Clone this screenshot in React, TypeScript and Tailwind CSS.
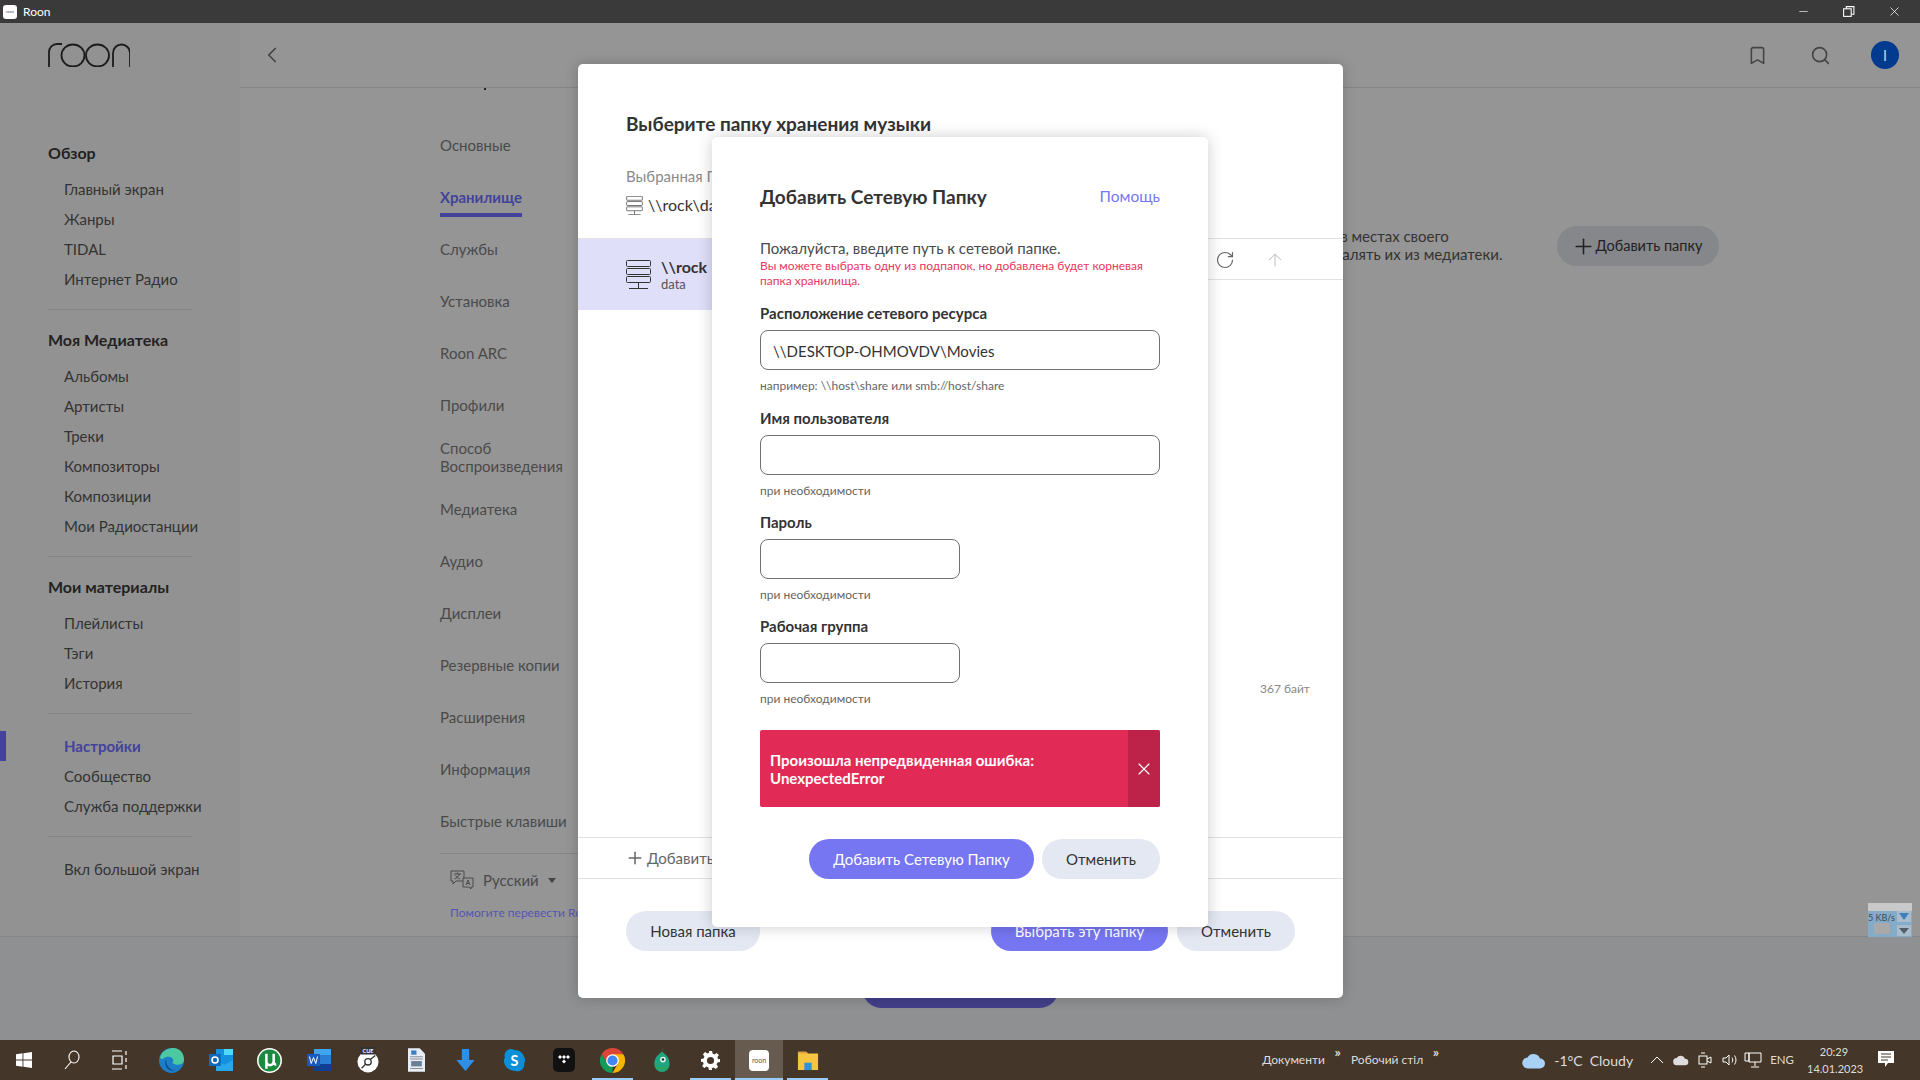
import React from "react";
import { Bookmark, ChevronLeft, Plus, RotateCw, Search, ArrowUp, X, Minus } from "lucide-react";

const overview = ["Главный экран", "Жанры", "TIDAL", "Интернет Радио"];
const library = ["Альбомы", "Артисты", "Треки", "Композиторы", "Композиции", "Мои Радиостанции"];
const mine = ["Плейлисты", "Тэги", "История"];
const settingsTabs = ["Службы", "Установка", "Roon ARC", "Профили"];
const settingsTabs2 = ["Медиатека", "Аудио", "Дисплеи", "Резервные копии", "Расширения", "Информация", "Быстрые клавиши"];

const SideLink = ({ label, active }: { label: string; active?: boolean }) => (
  <div className={active ? "h-[30px] pl-4 leading-[30px] text-[15px] font-bold text-[#43439a]" : "h-[30px] pl-4 leading-[30px] text-[15px] text-[#333]"}>
    {label}
  </div>
);

const Section = ({ title, items }: { title: string; items: string[] }) => (
  <div>
    <div className="h-[30px] text-[16px] font-bold leading-[30px] text-[#222]">{title}</div>
    <div className="mt-[6px]">
      {items.map((i) => (
        <SideLink key={i} label={i} />
      ))}
    </div>
  </div>
);

const Divider = () => <div className="my-[15px] h-px w-[144px] bg-[#858585]" />;

const ServerIcon = ({ className }: { className: string }) => (
  <svg viewBox="0 0 25 29" fill="none" stroke="#333" strokeWidth="1" className={className}>
    <rect x="0.5" y="0.5" width="24" height="6" rx="1" />
    <rect x="0.5" y="8.5" width="24" height="6" rx="1" />
    <rect x="0.5" y="16.5" width="24" height="6" rx="1" />
    <path d="M12.5 23v5M3 28.5h19" />
  </svg>
);

const Field = ({ label, hint, value, short, className }: { label: string; hint: string; value?: string; short?: boolean; className?: string }) => (
  <div className={className}>
    <div className="text-[15px] font-bold leading-[20px] text-[#333]">{label}</div>
    <div className={short ? "mt-[7px] h-[40px] w-[200px] rounded-lg border border-[#707070] px-3 text-[15px] leading-[40px] text-[#333]" : "mt-[7px] h-[40px] rounded-lg border border-[#707070] px-3 text-[15px] leading-[40px] text-[#333]"}>
      {value}
    </div>
    <div className="mt-[8px] text-[12px] leading-[15px] text-[#666]">{hint}</div>
  </div>
);

const Pill = ({ label, primary, className }: { label: string; primary?: boolean; className: string }) => (
  <div className={`${primary ? "bg-[#7676f2] text-white" : "bg-[#e4e8f2] text-[#333]"} flex h-10 items-center justify-center rounded-full text-[15px] ${className}`}>
    {label}
  </div>
);

const TaskIcon = ({ children, wide, active, line }: { children: React.ReactNode; wide?: boolean; active?: boolean; line?: boolean }) => (
  <div className={`relative flex h-10 shrink-0 items-center justify-center ${wide ? "w-[49px]" : "w-[48px]"} ${active ? "bg-[#675b50]" : ""}`}>
    {children}
    {line && <div className={`absolute bottom-0 h-[2px] bg-[#99ccf8] ${active ? "left-0 right-0" : "left-1 right-1"}`} />}
  </div>
);

const Cloud = ({ className, fill }: { className: string; fill: string }) => (
  <svg viewBox="0 0 24 16" className={className}>
    <path d="M6 16a5.500 5.500 0 0 1-.5-11A7 7 0 0 1 18 6a5 5 0 0 1 0 10z" fill={fill} />
  </svg>
);

export default function App() {
  return (
    <div className="relative flex h-[1080px] w-[1920px] flex-col overflow-hidden font-['Lato','Noto_Sans',sans-serif]">
      {/* title bar */}
      <div className="flex h-[23px] shrink-0 items-center bg-[#3a3a3a] text-white">
        <div className="ml-[3px] flex h-[14px] w-[14px] items-center justify-center rounded-[3px] bg-white text-[4px] text-[#555]">roon</div>
        <span className="ml-[6px] text-[12px]">Roon</span>
        <div className="ml-auto flex items-center">
          <Minus size={13} strokeWidth={1.2} className="mr-[32px]" />
          <svg viewBox="0 0 12 12" fill="none" stroke="white" strokeWidth="1" className="mr-[32px] h-[13px] w-[13px]">
            <rect x="1.5" y="3.5" width="7" height="7" />
            <path d="M4 3.5V1.5h7v7H8.5" />
          </svg>
          <X size={15} strokeWidth={1.2} className="mr-[18px]" />
        </div>
      </div>

      {/* app */}
      <div className="flex min-h-0 flex-1 flex-col bg-[#959595]">
        <div className="flex h-[913px] shrink-0">
          <aside className="relative w-[240px] shrink-0 bg-[#929292] pl-[48px]">
            <svg viewBox="0 0 82 24" fill="none" stroke="#1c1c1c" strokeWidth="1.8" className="mt-[20px] h-[24px] w-[82px]">
              <path d="M1 24V9a8 8 0 0 1 8-8h5" />
              <ellipse cx="25" cy="12.5" rx="11.5" ry="11" />
              <ellipse cx="49.5" cy="12.5" rx="11.5" ry="11" />
              <path d="M65 24V10a8.5 8.5 0 0 1 17 0v14" />
            </svg>
            <div className="mt-[71px]">
              <Section title="Обзор" items={overview} />
              <Divider />
              <Section title="Моя Медиатека" items={library} />
              <Divider />
              <Section title="Мои материалы" items={mine} />
              <Divider />
              <div className="pt-[2px]">
                <SideLink label="Настройки" active />
                <SideLink label="Сообщество" />
                <SideLink label="Служба поддержки" />
              </div>
              <Divider />
              <div className="pt-[2px]">
                <SideLink label="Вкл большой экран" />
              </div>
            </div>
            <div className="absolute left-0 top-[708px] h-[30px] w-[6px] bg-[#43439a]" />
          </aside>

          <div className="flex min-w-0 flex-1 flex-col">
            <header className="relative flex h-[65px] shrink-0 items-center border-b border-[#858585] pl-[19px] pr-[21px] text-[#444]">
              <ChevronLeft size={26} strokeWidth={1.6} />
              <Bookmark size={21} strokeWidth={1.8} className="ml-auto mr-[42px]" />
              <Search size={21} strokeWidth={1.8} className="mr-[40px]" />
              <div className="flex h-[28px] w-[28px] items-center justify-center rounded-full bg-[#013a8e] text-[16px] text-[#b9c6dc]">I</div>
              <div className="absolute bottom-[-3px] left-[244px] h-[2px] w-[2px] bg-[#222]" />
            </header>

            <div className="flex min-h-0 flex-1">
              <nav className="ml-[200px] w-[200px] shrink-0 pt-[41px] text-[15px] text-[#4a4a4a]">
                <div className="h-[52px] leading-[32px]">Основные</div>
                <div className="h-[52px] leading-[32px]">
                  <span className="inline-block h-[36px] border-b-4 border-[#43439a] font-bold text-[#43439a]">Хранилище</span>
                </div>
                {settingsTabs.map((t) => (
                  <div key={t} className="h-[52px] leading-[32px]">{t}</div>
                ))}
                <div className="mb-[2px] mt-[-2px] h-[52px] leading-[18px]">Способ<br />Воспроизведения</div>
                {settingsTabs2.map((t) => (
                  <div key={t} className="h-[52px] leading-[32px]">{t}</div>
                ))}
                <div className="mt-[-4px] border-t border-[#858585] pl-[10px] pt-[15px]">
                  <div className="flex items-center">
                    <svg viewBox="0 0 24 20" fill="none" stroke="#444" strokeWidth="0.9" className="h-[20px] w-[24px]">
                      <path d="M1 1h13v10H6l-3 3v-3H1z" />
                      <path d="M13 8h10v9h-2v2l-2-2h-6z" fill="#959595" />
                      <path d="M4 4h7M7.500 2.500V4M9.500 4c-1 2.500-3 4-5 5M5.500 5.500c1 1.500 3 3 4.500 3.500" />
                      <path d="M16 15l2-5 2 5M17 13.500h2" />
                    </svg>
                    <span className="ml-[9px]">Русский</span>
                    <span className="ml-[9px] h-0 w-0 border-x-[4px] border-t-[5px] border-x-transparent border-t-[#444]" />
                  </div>
                  <div className="mt-[12px] whitespace-nowrap text-[12px] text-[#5555b0]">Помогите перевести Roon</div>
                </div>
              </nav>
              <div className="relative min-w-0 flex-1">
                <div className="absolute left-[680px] top-[139px] whitespace-nowrap text-[15px] leading-[18px] text-[#333]">
                  ки в местах своего
                  <br />
                  <span className="ml-[6px]">удалять их из медиатеки.</span>
                </div>
                <div className="absolute left-[917px] top-[138px] flex h-10 w-[162px] items-center justify-center rounded-full bg-[#85878b] text-[14.500px] text-[#222]">
                  <Plus size={25} strokeWidth={1.5} className="-ml-[3px]" />
                  Добавить папку
                </div>
              </div>
            </div>
          </div>
        </div>

        {/* player bar */}
        <div className="flex flex-1 justify-center border-t border-[#858585] bg-[#8f9092] pt-[31px]">
          <div className="h-[40px] w-[197px] rounded-[20px] bg-[#433f8a]" />
        </div>
      </div>

      {/* tray widget */}
      <div className="absolute left-[1868px] top-[903px] h-[34px] w-[44px] bg-[#84abc8]">
        <div className="h-[8px] bg-[#c9c9c9]" />
        <div className="relative h-[26px]">
          <div className="text-[9px] leading-[14px] text-[#3d4a55]">5 KB/s</div>
          <div className="absolute right-[1px] top-0 flex h-[11px] w-[14px] items-center justify-center bg-[#a9bccb]">
            <span className="h-0 w-0 border-x-[5px] border-t-[7px] border-x-transparent border-t-[#3a7fc0]" />
          </div>
          <div className="absolute right-[1px] top-[14px] flex h-[11px] w-[14px] items-center justify-center bg-[#a9bccb]">
            <span className="h-0 w-0 border-x-[5px] border-t-[6px] border-x-transparent border-t-[#53606b]" />
          </div>
          <div className="absolute left-[6px] top-[12px] h-[11px] w-[16px] rounded-[2px] bg-[#a9a9a9]" />
        </div>
      </div>

      {/* taskbar */}
      <div className="flex h-10 shrink-0 items-center bg-[#443628] text-[#ddd]">
        <div className="flex items-center">
          <TaskIcon>
            <svg viewBox="0 0 16 16" className="h-[16px] w-[16px]" fill="white">
              <path d="M0 2.3l6.5-1v6.3H0zM7.4 1.2L16 0v7.6H7.4zM0 8.4h6.5v6.3L0 13.7zM7.4 8.4H16V16l-8.6-1.2z" />
            </svg>
          </TaskIcon>
          <TaskIcon>
            <svg viewBox="0 0 16 20" fill="none" stroke="white" strokeWidth="1.1" className="h-[20px] w-[16px]">
              <ellipse cx="10" cy="7" rx="5" ry="6" />
              <path d="M7 12l-6 7" />
            </svg>
          </TaskIcon>
          <TaskIcon>
            <svg viewBox="0 0 16 20" fill="none" stroke="white" strokeWidth="1.2" className="h-[20px] w-[16px]">
              <path d="M0 1h10M0 19h10M1 6h9v8H1zM14 1v4M14 8v4M14 15v4" />
            </svg>
          </TaskIcon>
        </div>
        <div className="ml-[3px] flex items-center">
          <TaskIcon wide>
            <svg viewBox="0 0 24 24" className="h-[25px] w-[25px]">
              <circle cx="12" cy="12" r="12" fill="#1c7ec7" />
              <path d="M1 9C3 2 10 0 14 0c6 0 10 5 10 11 0 3-2 5-6 5-3 0-5-1-5-2 1-1 1-3 0-4-2-2-6-2-9 0-1 1-2 1-3-1z" fill="#4cc9a0" />
              <path d="M16 22C10 23 6 19 6 14c0-1 0-2 1-3-1 5 3 10 9 11z" fill="#114a8b" />
            </svg>
          </TaskIcon>
          <TaskIcon wide>
            <svg viewBox="0 0 24 24" className="h-[24px] w-[24px]">
              <path d="M7 1h17v22H7z" fill="#1490df" />
              <path d="M7 12l8.500 5L24 12v11H7z" fill="#28a8ea" />
              <path d="M15 1h9v6h-9z" fill="#50d9ff" />
              <rect x="0" y="6" width="12" height="12" rx="1" fill="#0f6cbd" />
              <circle cx="6" cy="12" r="3" fill="none" stroke="white" strokeWidth="1.6" />
            </svg>
          </TaskIcon>
          <TaskIcon wide>
            <svg viewBox="0 0 24 24" className="h-[25px] w-[25px]">
              <circle cx="12" cy="12" r="12" fill="white" />
              <circle cx="12" cy="12" r="10.500" fill="#1a8a3e" />
              <path d="M9 5.500V20M9 13a3.500 3.500 0 0 0 7 0V5.500M16 13c0 2 1 3 2.500 3" fill="none" stroke="white" strokeWidth="2.400" />
            </svg>
          </TaskIcon>
          <TaskIcon wide>
            <svg viewBox="0 0 24 24" className="h-[24px] w-[24px]">
              <path d="M7 1h17v22H7z" fill="#2b7cd3" />
              <path d="M7 1h17v6H7z" fill="#41a5ee" />
              <path d="M7 16h17v7H7z" fill="#103f91" />
              <rect x="0" y="6" width="13" height="12" rx="1" fill="#185abd" />
              <path d="M2.500 8.500l1.700 7 2.300-6 2.300 6 1.700-7" fill="none" stroke="white" strokeWidth="1" />
            </svg>
          </TaskIcon>
          <TaskIcon wide>
            <svg viewBox="0 0 24 28" className="h-[26px] w-[22px]">
              <circle cx="12" cy="16" r="11.500" fill="white" />
              <rect x="4" y="0" width="16" height="8" fill="#333" />
              <text x="12" y="6.500" textAnchor="middle" fontSize="6" fontWeight="700" fill="white">CUE</text>
              <circle cx="12" cy="16" r="3.500" fill="none" stroke="#333" strokeWidth="1.500" />
              <path d="M5 23l4.500-4.500M14.500 13.500L20 9" stroke="#333" strokeWidth="1.500" />
            </svg>
          </TaskIcon>
          <TaskIcon wide>
            <svg viewBox="0 0 16 22" className="h-[24px] w-[17px]">
              <path d="M0 0h11l5 5v17H0z" fill="#e8edf3" />
              <path d="M2 8h12M2 10h12M2 19h12" stroke="#8a9099" strokeWidth="1" />
              <rect x="3" y="2" width="5" height="4" fill="#3d7fc4" />
              <rect x="3" y="12" width="10" height="5" fill="#6b7f94" />
            </svg>
          </TaskIcon>
          <TaskIcon wide>
            <svg viewBox="0 0 20 24" className="h-[22px] w-[19px]" fill="#2f8fe6">
              <path d="M6 0h8v12h6L10 24 0 12h6z" />
            </svg>
          </TaskIcon>
          <TaskIcon wide>
            <svg viewBox="0 0 24 24" className="h-[25px] w-[23px]">
              <path d="M7 0a7 7 0 0 1 5 1c6 0 11 5 11 11 0 1 0 2-1 3a7 7 0 0 1-9 8C6 23 1 18 1 12c0-1 0-2 1-3A7 7 0 0 1 7 0z" fill="#0a8fd8" />
              <text x="12" y="17.500" textAnchor="middle" fontSize="15" fontWeight="700" fill="white">S</text>
            </svg>
          </TaskIcon>
          <TaskIcon wide>
            <svg viewBox="0 0 22 24" className="h-[24px] w-[22px]">
              <rect width="22" height="24" rx="5" fill="#111" />
              <path d="M7 7l2 2-2 2-2-2zM11 7l2 2-2 2-2-2zM15 7l2 2-2 2-2-2zM11 11.500l2 2-2 2-2-2z" fill="white" />
            </svg>
          </TaskIcon>
          <TaskIcon wide line>
            <svg viewBox="0 0 24 24" className="h-[25px] w-[25px]">
              <path d="M12 12L22.400 6A12 12 0 0 0 1.600 6L7 15z" fill="#db4437" />
              <path d="M12 24A12 12 0 0 1 1.600 6L7 15l5 3z" fill="#0f9d58" />
              <path d="M12 24a12 12 0 0 0 10.400-18H12l5 9z" fill="#f4b400" />
              <circle cx="12" cy="12" r="5.500" fill="#4285f4" stroke="white" strokeWidth="1.200" />
            </svg>
          </TaskIcon>
          <TaskIcon wide>
            <svg viewBox="0 0 16 26" className="h-[25px] w-[16px]">
              <path d="M9 0c0 2 0 3-1 4 4 3 8 6 8 13a8 8 0 0 1-16 0C0 10 4 7 8 4z" fill="#1fa67f" />
              <path d="M1 19a8 7 0 0 0 14 0c-3 2-10 2-14 0z" fill="#2ea84a" />
              <circle cx="9" cy="12" r="3" fill="#d7f2e4" />
              <circle cx="9" cy="12" r="1.300" fill="#133" />
            </svg>
          </TaskIcon>
          <TaskIcon wide line>
            <svg viewBox="0 0 24 24" className="h-[19px] w-[19px]" fill="white">
              <path fillRule="evenodd" d="M10 0h4l.6 3.300 2.400 1 2.800-1.900 2.800 2.800-1.900 2.800 1 2.400L24 10v4l-3.300.6-1 2.400 1.900 2.800-2.800 2.800-2.800-1.900-2.400 1L14 24h-4l-.6-3.300-2.400-1-2.800 1.900-2.800-2.800 1.900-2.800-1-2.400L0 14v-4l3.300-.6 1-2.400L2.400 4.200l2.800-2.800L8 3.300l2.400-1zM12 7.500a4.500 4.500 0 1 0 0 9 4.500 4.500 0 0 0 0-9z" />
            </svg>
          </TaskIcon>
          <TaskIcon active line>
            <div className="flex h-[21px] w-[20px] items-center justify-center rounded-[4px] bg-white text-[7px] text-[#555]">roon</div>
          </TaskIcon>
          <TaskIcon wide line>
            <svg viewBox="0 0 24 24" className="h-[22px] w-[22px]">
              <path d="M1 3h9l2 2h11v18H1z" fill="#f5c542" />
              <path d="M1 3h9l2 2H1z" fill="#e8a33d" />
              <path d="M8 15h8v8H8z" fill="#2f8fd8" />
            </svg>
            <div className="absolute bottom-0 right-[4px] h-[2px] w-[9px] bg-[#7fa6c6]" />
          </TaskIcon>
        </div>

        <div className="ml-auto flex items-center text-[12px]">
          <span className="relative mr-[26px]">
            Документи
            <span className="absolute -right-[16px] -top-[10px] text-[14px] font-bold">»</span>
          </span>
          <span className="relative mr-[99px]">
            Робочий стіл
            <span className="absolute -right-[16px] -top-[10px] text-[14px] font-bold">»</span>
          </span>
          <Cloud className="mr-[8px] h-[17px] w-[24px]" fill="#a9d0f5" />
          <span className="mr-[7px] text-[14px]">-1°C</span>
          <span className="mr-[17px] text-[14px]">Cloudy</span>
          <svg viewBox="0 0 14 8" fill="none" stroke="white" className="mr-[9px] h-[8px] w-[14px]">
            <path d="M1 7l6-6 6 6" />
          </svg>
          <Cloud className="mr-[9px] h-[12px] w-[16px]" fill="#ddd" />
          <svg viewBox="0 0 14 16" fill="none" stroke="white" className="mr-[10px] h-[16px] w-[14px]">
            <rect x="1" y="4" width="8" height="8" />
            <path d="M9 7l4-2v6l-4-2M3 1h4M3 15h4" />
          </svg>
          <svg viewBox="0 0 16 14" fill="none" stroke="white" className="mr-[6px] h-[14px] w-[16px]">
            <path d="M1 5h3l3-3v10L4 9H1zM10 4.500c1 1.500 1 3.500 0 5M12.500 2.500c2 2.500 2 6.500 0 9" />
          </svg>
          <svg viewBox="0 0 18 16" fill="none" stroke="white" className="mr-[8px] h-[16px] w-[18px]">
            <path d="M5 1h12v9H5zM1 1h4v8H1zM11 10v4M7 15h8" />
          </svg>
          <span className="mr-[13px] text-[11.500px]">ENG</span>
          <div className="mr-[17px] w-[54px] text-center text-[11px] leading-[17px]">
            <div>20:29</div>
            <div>14.01.2023</div>
          </div>
          <svg viewBox="0 0 16 18" className="mr-[26px] h-[18px] w-[16px]">
            <path d="M0 0h16v12h-6l-3 4v-4H0z" fill="white" />
            <path d="M3 3h10M3 6h10M3 9h7" stroke="#443628" />
          </svg>
        </div>
      </div>

      {/* storage folder dialog */}
      <div className="absolute left-[578px] top-[64px] flex h-[934px] w-[765px] flex-col rounded-[5px] bg-white shadow-[0_0_14px_rgba(0,0,0,0.2)]">
        <div className="pl-[48px] pt-[48px] text-[19px] font-bold leading-[24px] text-[#333]">Выберите папку хранения музыки</div>
        <div className="pl-[48px] pt-[30px] text-[15px] leading-[20px] text-[#8a8a8a]">Выбранная Папка</div>
        <div className="flex items-center pl-[48px] pt-[7px] text-[16px] text-[#333]">
          <ServerIcon className="mr-[5px] h-[19px] w-[17px]" />
          \\rock\data
        </div>
        <div className="mt-[21px] flex h-[70px] items-center border-t border-[#e2e2e2] pl-[48px]">
          <div className="absolute left-0 top-[175px] flex h-[71px] w-[134px] items-center bg-[#dfdff9] pl-[48px]">
            <ServerIcon className="h-[29px] w-[25px]" />
            <div className="ml-[10px]">
              <div className="text-[16px] font-bold leading-[18px] text-[#333]">\\rock</div>
              <div className="text-[13px] leading-[16px] text-[#555]">data</div>
            </div>
          </div>
        </div>
        <div className="absolute right-[60px] top-[186px] flex items-center text-[#666]">
          <RotateCw size={20} strokeWidth={1.4} />
          <ArrowUp size={20} strokeWidth={1.2} className="ml-[30px] mr-[-2px] text-[#bbb]" />
        </div>
        <div className="absolute left-[630px] top-[215px] h-px w-[135px] bg-[#e2e2e2]" />
        <div className="absolute left-[682px] top-[617px] text-[12px] leading-[15px] text-[#888]">367 байт</div>
        <div className="mt-auto">
          <div className="flex h-[42px] items-center border-y border-[#e2e2e2] pl-[47px] text-[15px] text-[#666]">
            <Plus size={20} strokeWidth={1.8} className="mr-[2px]" />
            Добавить папку
          </div>
          <div className="flex items-center pb-[47px] pl-[48px] pr-[48px] pt-[32px]">
            <Pill label="Новая папка" className="w-[134px]" />
            <Pill label="Выбрать эту папку" primary className="ml-auto w-[177px]" />
            <Pill label="Отменить" className="ml-[9px] w-[118px]" />
          </div>
        </div>
      </div>

      {/* network folder dialog */}
      <div className="absolute left-[712px] top-[137px] h-[790px] w-[496px] rounded-[5px] bg-white px-[48px] shadow-[0_0_16px_rgba(0,0,0,0.2)]">
        <div className="flex items-center justify-between pt-[47px] leading-[26px]">
          <span className="text-[19px] font-bold text-[#333]">Добавить Сетевую Папку</span>
          <span className="-translate-y-[1px] text-[15.500px] text-[#7676f2]">Помощь</span>
        </div>
        <div className="mt-[28px] text-[15px] leading-[20px] text-[#4a4a4a]">Пожалуйста, введите путь к сетевой папке.</div>
        <div className="text-[12px] leading-[15px] text-[#e8365d]">
          Вы можете выбрать одну из подпапок, но добавлена будет корневая папка хранилища.
        </div>
        <div className="mt-[15px] flex flex-col gap-[14px]">
          <Field label="Расположение сетевого ресурса" value="\\DESKTOP-OHMOVDV\Movies" hint="например: \\host\share или smb://host/share" className="mb-[1px]" />
          <Field label="Имя пользователя" hint="при необходимости" />
          <Field label="Пароль" hint="при необходимости" short />
          <Field label="Рабочая группа" hint="при необходимости" short />
        </div>
        <div className="mt-[24px] flex h-[77px] overflow-hidden rounded-[2px] bg-[#e12b56]">
          <div className="flex flex-1 items-center pl-[10px] text-[15px] font-bold leading-[18px] text-white">
            Произошла непредвиденная ошибка:
            <br />
            UnexpectedError
          </div>
          <div className="flex w-[32px] items-center justify-center bg-[#bd2348] text-white">
            <X size={20} strokeWidth={1.4} />
          </div>
        </div>
        <div className="mt-[32px] flex justify-end gap-[8px]">
          <Pill label="Добавить Сетевую Папку" primary className="w-[225px]" />
          <Pill label="Отменить" className="w-[118px]" />
        </div>
      </div>
    </div>
  );
}
